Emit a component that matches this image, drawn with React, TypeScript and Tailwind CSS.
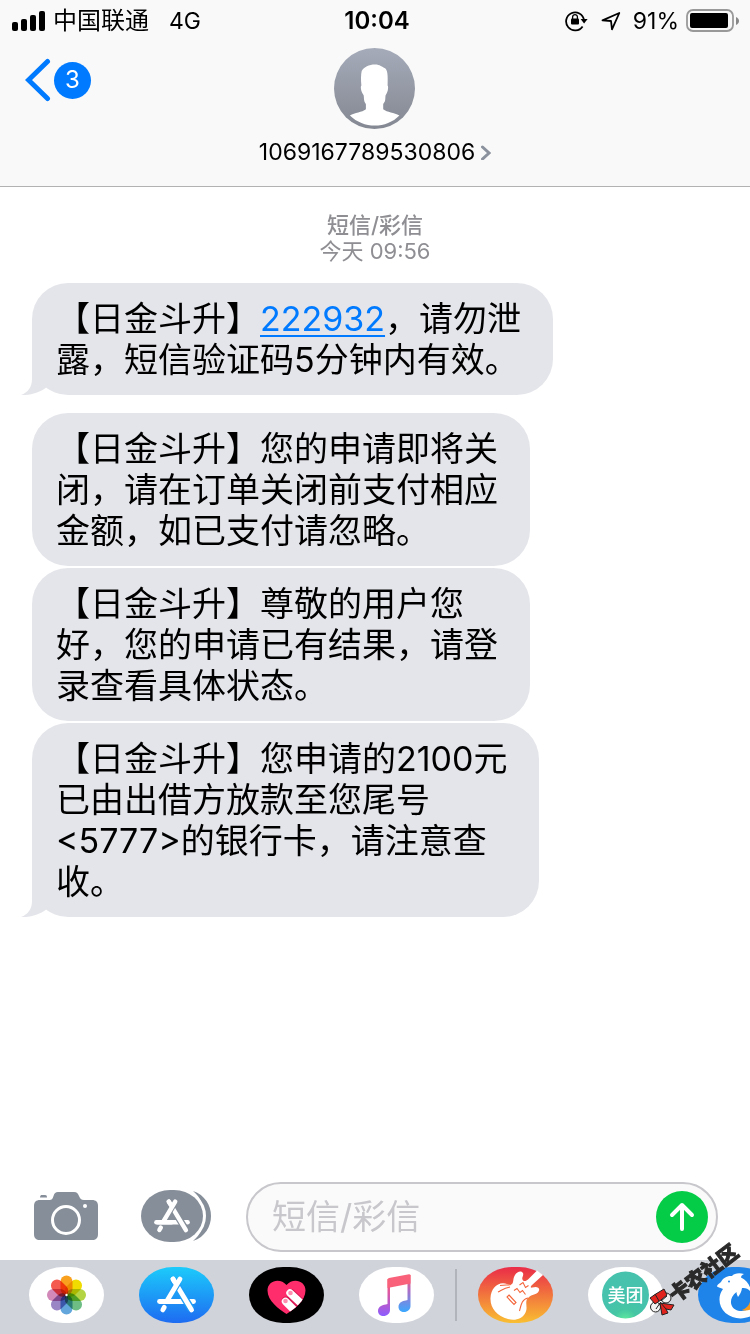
import type { ReactNode } from "react";

interface Message {
  id: number;
  lines: ReactNode[];
  tail: boolean;
}

const messages: Message[] = [
  {
    id: 1,
    lines: [
      <>
        【日金斗升】
        <a
          href="#code"
          className="text-[#007aff] underline decoration-2 underline-offset-4"
        >
          222932
        </a>
        ，请勿泄
      </>,
      "露，短信验证码5分钟内有效。",
    ],
    tail: true,
  },
  {
    id: 2,
    lines: [
      "【日金斗升】您的申请即将关",
      "闭，请在订单关闭前支付相应",
      "金额，如已支付请忽略。",
    ],
    tail: false,
  },
  {
    id: 3,
    lines: [
      "【日金斗升】尊敬的用户您",
      "好，您的申请已有结果，请登",
      "录查看具体状态。",
    ],
    tail: false,
  },
  {
    id: 4,
    lines: [
      "【日金斗升】您申请的2100元",
      "已由出借方放款至您尾号",
      "<5777>的银行卡，请注意查",
      "收。",
    ],
    tail: true,
  },
];

function StatusBar() {
  return (
    <div className="grid h-[41px] grid-cols-[1fr_auto_1fr] items-center text-black">
      <div className="flex items-center pl-3">
        <svg width="33" height="20" viewBox="0 0 33 20" aria-hidden="true">
          <rect x="0" y="11" width="6" height="9" rx="2" />
          <rect x="9" y="8" width="6" height="12" rx="2" />
          <rect x="18" y="4" width="6" height="16" rx="2" />
          <rect x="27" y="0" width="6" height="20" rx="2" />
        </svg>
        <span className="ml-2 text-2xl leading-8">中国联通</span>
        <span className="ml-5 text-[23px] leading-8">4G</span>
      </div>
      <time className="pl-1 text-2xl leading-8 font-semibold">10:04</time>
      <div className="flex items-center justify-end pr-[11px]">
        <svg width="24" height="22" viewBox="0 0 24 22" aria-hidden="true">
          <path
            d="M17.6 16.4A9 9 0 1 1 19 10"
            fill="none"
            stroke="#000"
            strokeWidth="1.8"
          />
          <path d="M15.6 9h7l-3.5 4.4z" />
          <rect x="6" y="8.5" width="8" height="6" rx="1" />
          <path
            d="M7.6 9V7a2.4 2.4 0 0 1 4.8 0v2"
            fill="none"
            stroke="#000"
            strokeWidth="1.3"
          />
        </svg>
        <svg
          className="ml-3"
          width="20"
          height="20"
          viewBox="0 0 20 20"
          aria-hidden="true"
        >
          <path
            d="M1.5 9.4 18.3 2 11 18.300 10 10z"
            fill="none"
            stroke="#000"
            strokeWidth="1.8"
            strokeLinejoin="round"
          />
        </svg>
        <span className="ml-3 text-[23px] leading-8">91%</span>
        <svg
          className="ml-[7px]"
          width="53"
          height="24"
          viewBox="0 0 53 24"
          aria-hidden="true"
        >
          <rect
            x="1"
            y="1"
            width="46"
            height="21"
            rx="6"
            fill="none"
            stroke="#999"
            strokeWidth="1.800"
          />
          <rect x="4" y="4" width="38" height="15" rx="2" />
          <path d="M50 8c4 1.500 4 6.500 0 8z" fill="#888" />
        </svg>
      </div>
    </div>
  );
}

function Avatar() {
  return (
    <svg width="81" height="81" viewBox="0 0 81 81" aria-hidden="true">
      <defs>
        <linearGradient id="avatar" x1="0" y1="0" x2="0" y2="1">
          <stop offset="0" stopColor="#a5abb9" />
          <stop offset="1" stopColor="#848892" />
        </linearGradient>
      </defs>
      <circle cx="40.5" cy="40.5" r="40.5" fill="url(#avatar)" />
      <path
        fill="#fff"
        d="M41 16.500c5 0 7 2.500 10 3.700 2.500 2 3 6 2.600 17.300 1 .5.6 6-1.400 8.700-1.200 1-.5 4-1.200 6.800-.6 1.500-1.500 2-1.800 3.300v5c4 3.200 11 3.200 16.200 6.200-13 13.400-36 13.400-49.500 0 5-3 12-3 16-6.200v-5c-.3-1.300-1.300-1.800-1.600-3.300-.7-2.800 0-5.800-1.300-6.800-2-2.700-2.800-8.200-1.600-8.700-.6-6-.5-10.500.3-14.500 2.300-4 7.300-6.500 13.300-6.500z"
      />
    </svg>
  );
}

function Header() {
  return (
    <header className="border-b border-[#b2b2b2] bg-[#f9f9f9]">
      <StatusBar />
      <div className="grid grid-cols-[1fr_auto_1fr] items-start pb-[18px]">
        <button
          type="button"
          aria-label="返回，3 条未读"
          className="mt-[17px] ml-[25px] flex items-center gap-[3px] justify-self-start"
        >
          <svg width="26" height="44" viewBox="0 0 26 44" aria-hidden="true">
            <path
              d="M22.500 3.500 3.500 22l19 18.500"
              fill="none"
              stroke="#007aff"
              strokeWidth="5"
              strokeLinecap="round"
              strokeLinejoin="miter"
            />
          </svg>
          <span className="flex size-[37px] items-center justify-center rounded-full bg-[#007aff] text-2xl text-white">
            3
          </span>
        </button>
        <button type="button" className="flex flex-col items-center pt-[7px]">
          <Avatar />
          <span className="mt-[7px] flex items-center gap-1.5 text-[23px] leading-8 text-black">
            1069167789530806
            <svg width="10" height="16" viewBox="0 0 10 16" aria-hidden="true">
              <path
                d="m1.500 3 6.500 6-6.500 6"
                fill="none"
                stroke="#8b929e"
                strokeWidth="3"
                strokeLinecap="round"
              />
            </svg>
          </span>
        </button>
      </div>
    </header>
  );
}

function Bubble({ message }: { message: Message }) {
  return (
    <li className="relative w-fit rounded-[36px] bg-[#e4e5ea] py-[15px] pr-8 pl-6 text-[34px] leading-[41px] text-black not-last:has-[svg]:mb-4">
      {message.tail && (
        <svg
          className="absolute bottom-0 -left-[11px]"
          width="44"
          height="36"
          viewBox="0 0 44 36"
          aria-hidden="true"
        >
          <path
            d="M11 0v20c0 8-4 13.500-11 16 10 .5 18-2.500 24.500-7L44 16V0z"
            fill="#e4e5ea"
          />
        </svg>
      )}
      {message.lines.map((line, i) => (
        <span key={i} className="relative block whitespace-nowrap">
          {line}
        </span>
      ))}
    </li>
  );
}

function StoreGlyph({ cut }: { cut: string }) {
  return (
    <g strokeLinecap="round" fill="none" strokeWidth="4.800" stroke="#fff">
      <path d="M20.500 34.500h34" />
      <path d="m34 12.500 18.500 30" stroke={cut} strokeWidth="7.500" strokeLinecap="butt" />
      <path d="m34 12 18.600 31" />
      <path d="M39 15 28 33" stroke={cut} strokeWidth="7.500" strokeLinecap="butt" />
      <path d="M41 12 28.500 33M25.300 40.300l-1.500 2.600M22 34.500h15" />
      <path d="m34 12 3 5" />
    </g>
  );
}

function Composer() {
  return (
    <form
      className="flex items-center bg-white pt-2 pr-8 pb-2 pl-[34px]"
      onSubmit={(e) => e.preventDefault()}
    >
      <button type="button" aria-label="相机">
        <svg width="64" height="50" viewBox="0 1 64 50">
          <path
            fill="#868e99"
            d="M6 9h9c3 0 3.500-1 4.500-4S21.500 1 24 1h16c3 0 3.800 1.500 5 4s2 4 5 4h8c4 0 6 2 6 6v28c0 4-2 6-6 6H6c-4 0-6-2-6-6V15c0-4 2-6 6-6zM6 6.500C6 4.500 7 4 8 4h3c1.500 0 2 .8 2 2.500z"
          />
          <circle cx="32" cy="29" r="13.500" fill="none" stroke="#fff" strokeWidth="3" />
          <circle cx="51" cy="15" r="2" fill="#fff" />
        </svg>
      </button>
      <button type="button" aria-label="应用" className="ml-[43px]">
        <svg width="70" height="54" viewBox="0 0 70 54">
          <path d="M52 1c24 8 24 42 0 50 15-12 15-38 0-50z" fill="#868e99" />
          <rect x="-2" y="-2" width="67" height="56" rx="30" ry="28" fill="#fff" />
          <rect width="62" height="52" rx="29" ry="26" fill="#868e99" />
          <g transform="translate(-3.500 .5) scale(.92)">
            <StoreGlyph cut="#868e99" />
          </g>
        </svg>
      </button>
      <div className="ml-[35px] flex h-[70px] min-w-0 flex-1 items-center rounded-full border-2 border-[#c7c7cc] bg-[#fafafa] pr-2 pl-6">
        <input
          type="text"
          aria-label="短信/彩信"
          placeholder="短信/彩信"
          className="min-w-0 flex-1 bg-transparent text-[34px] leading-[50px] text-black outline-none placeholder:text-[#c7c7cc]"
        />
        <button
          type="submit"
          aria-label="发送"
          className="flex size-[52px] items-center justify-center rounded-full bg-[#04cc47]"
        >
          <svg width="26" height="30" viewBox="0 0 26 30" aria-hidden="true">
            <path
              d="M13 27V3M3 13 13 3l10 10"
              fill="none"
              stroke="#fff"
              strokeWidth="4"
              strokeLinecap="round"
              strokeLinejoin="round"
            />
          </svg>
        </button>
      </div>
    </form>
  );
}

const petals = [
  "#f9a01f",
  "#f0dc00",
  "#b4d444",
  "#6dbd84",
  "#62a6dc",
  "#9a86c4",
  "#d288b8",
  "#f55a50",
];

function Pill({ fill, children }: { fill: string; children: ReactNode }) {
  return (
    <svg width="75" height="56" viewBox="0 0 75 56" aria-hidden="true">
      <rect width="75" height="56" rx="34" ry="28" fill={fill} />
      {children}
    </svg>
  );
}

function PhotosIcon() {
  return (
    <Pill fill="#fff">
      <g transform="translate(37.500 28)">
        {petals.map((color, i) => (
          <rect
            key={color}
            x="-6"
            y="-19.500"
            width="12"
            height="19.500"
            rx="6"
            fill={color}
            transform={`rotate(${i * 45})`}
            className="mix-blend-multiply"
          />
        ))}
        <circle r="1.200" fill="#fff" />
      </g>
    </Pill>
  );
}

function StoreIcon() {
  return (
    <Pill fill="url(#store)">
      <defs>
        <linearGradient id="store" x1="0" y1="0" x2="0" y2="1">
          <stop offset="0" stopColor="#1ccbfb" />
          <stop offset="1" stopColor="#1e6bf1" />
        </linearGradient>
      </defs>
      <StoreGlyph cut="#1e9df6" />
    </Pill>
  );
}

function HeartIcon() {
  const heart =
    "M37.500 47C30 42 18.500 34 18.500 23.500c0-10.500 13-13 19-5.500 6-7.500 19-5 19 5.500C56.500 34 45 42 37.500 47z";
  return (
    <Pill fill="#000">
      <clipPath id="heart">
        <path d={heart} />
      </clipPath>
      <path d={heart} fill="#ff2d6b" />
      <g clipPath="url(#heart)" strokeLinecap="round">
        <path d="m42 26.500 16 15M37 34l14 14" stroke="#d91a55" strokeWidth="9" />
        <path d="m41 26 16 15M36.500 34.500l14 14" stroke="#fff" strokeWidth="7.500" />
        <circle cx="41.500" cy="26" r="2.300" fill="#ff8fb0" />
        <circle cx="36.500" cy="34" r="2.300" fill="#ff8fb0" />
      </g>
    </Pill>
  );
}

function MusicIcon() {
  return (
    <Pill fill="#fff">
      <defs>
        <linearGradient id="note-left" x1="0" y1="0" x2="0" y2="1">
          <stop offset="0" stopColor="#ff5c62" />
          <stop offset=".35" stopColor="#e0589f" />
          <stop offset="1" stopColor="#8b5cff" />
        </linearGradient>
        <linearGradient id="note-right" x1="0" y1="0" x2="0" y2="1">
          <stop offset="0" stopColor="#ff5c62" />
          <stop offset=".4" stopColor="#b06cc4" />
          <stop offset="1" stopColor="#3ba8ff" />
        </linearGradient>
      </defs>
      <path
        d="M28.500 12h2.500v31c0 3.500-3 6-6.500 6-3 0-5.500-2-5.500-5 0-5 5-6 9.500-7z"
        fill="url(#note-left)"
      />
      <path
        d="M48.500 8h3v31c0 3.500-3 6-6.500 6-3 0-5.500-2-5.500-5 0-5 4.500-6 9-7z"
        fill="url(#note-right)"
      />
      <path d="M28.500 13q0-1.500 1.500-2l20-3.800q1.500 0 1.500 1.300v8L28.500 21z" fill="#f9607a" />
    </Pill>
  );
}

function GuitarIcon() {
  return (
    <Pill fill="url(#guitar)">
      <defs>
        <linearGradient id="guitar" x1="0" y1="0" x2="0" y2="1">
          <stop offset="0" stopColor="#ea2c48" />
          <stop offset="1" stopColor="#f9bf32" />
        </linearGradient>
      </defs>
      <path
        fill="#fff"
        d="M34 17c2-2 .5-5 3-9 2-3.500 6.500-5 8-2 1 2.500-1.500 4.500-.5 6.500 1 2.500 4 1.500 5.500 0L59 3.500l6 4.500L53.500 18.500c-1.200 1.500-1 2.500 1 2 4-1.500 7.500 0 6.500 3-1.500 4.500-6.500 3.500-10 6.500-5.500 4.500-.5 9.500-3.500 15.500C44.500 52 37 54 30 52 19 49 12 41 12.500 31 13 22 18 16.500 25 16.200c4 0 6.500 2.500 9 .8z"
      />
      <g fill="none" stroke="#f4653a" strokeWidth="1.100">
        <path d="m31 28 7 7.500-2 2-7-7.500zM36 23.500l3-2 3 4 2.500-2 3 4M41.500 18l3.500-2.500 2.500 5 3-2" />
        <path d="M22 18.500c5-1 8 0 11-1M20 25c4-2 6-4 12-5M50 31c-6 1-7 7-8.500 13" />
      </g>
    </Pill>
  );
}

function MeituanIcon() {
  return (
    <Pill fill="#fff">
      <defs>
        <radialGradient id="meituan" cx=".5" cy="1.050" r=".5">
          <stop offset="0" stopColor="#62ee9e" />
          <stop offset=".5" stopColor="#45c6a3" />
          <stop offset="1" stopColor="#46c2ad" />
        </radialGradient>
      </defs>
      <circle cx="37.500" cy="28" r="23.500" fill="url(#meituan)" />
      <text x="37.500" y="35" textAnchor="middle" fontSize="18" fontWeight="500" fill="#fff">
        美团
      </text>
    </Pill>
  );
}

function DolphinIcon() {
  return (
    <Pill fill="#1f84ea">
      <path
        fill="#fff"
        d="M19 19.500c0-2 2-2.500 4-4.500 2-4 6-6.500 11-6 2-2.500 7-3.500 12-2-2 .8-3 2-3 3.500 6 2.500 10 9 10 15-2-3.500-5-5-9-4.500-.5 4-2 6-4 9-1-2-1.500-3.500-1.500-5-5 4-6.500 8.500-5 13 1.500 4 5.500 6 10 6 3 0 7-1 10-4v9c-9 4-19 3-26-3-7-6-8-17-2.500-24-1.500-1-3-1-6-2.500z"
      />
      <path d="M52 31c1 5-2 9.500-8 12 5 1.500 10 0 14-4v-6z" fill="#f79a1e" />
      <circle cx="31" cy="14.500" r="1" fill="#1f84ea" />
    </Pill>
  );
}

function Watermark() {
  return (
    <svg
      className="pointer-events-none absolute right-0 bottom-3 z-10"
      width="104"
      height="84"
      viewBox="0 0 104 84"
      aria-hidden="true"
    >
      <g stroke="#222" strokeWidth="1">
        <circle cx="20" cy="60" r="5" fill="#f2f2f2" />
        <circle cx="9.500" cy="69" r="5" fill="#f2f2f2" />
        <path d="M4 60 9 56.500 18 51l3 6-6 5-6 4z" fill="#e0231c" />
        <path d="m14 65 14 2-3 5-5-1 2 4-6 2z" fill="#e0231c" />
        <path d="m9 56 4 7M14 64l6 7M15 63l6-5M14 65l-4 6" />
      </g>
      <text
        transform="translate(30 65) rotate(-37)"
        fontSize="20"
        fontWeight="900"
        fill="#2a2a2a"
        stroke="#2a2a2a"
        strokeWidth="1"
      >
        卡农社区
      </text>
    </svg>
  );
}

const pinnedApps = [
  { label: "照片", icon: <PhotosIcon /> },
  { label: "App Store", icon: <StoreIcon /> },
  { label: "Digital Touch", icon: <HeartIcon /> },
  { label: "音乐", icon: <MusicIcon /> },
];

const recentApps = [
  { label: "库乐队", icon: <GuitarIcon /> },
  { label: "美团", icon: <MeituanIcon /> },
  { label: "携程", icon: <DolphinIcon /> },
];

function AppDock() {
  return (
    <nav className="relative bg-[#d0d3da]">
      <div className="flex h-[74px] items-center gap-[35px] overflow-hidden pb-[5px] pl-[29px]">
        {pinnedApps.map((app) => (
          <button key={app.label} type="button" aria-label={app.label} className="shrink-0">
            {app.icon}
          </button>
        ))}
        <div className="-mx-[14px] h-[52px] w-0.5 shrink-0 bg-[#b1b4ba]" />
        {recentApps.map((app) => (
          <button key={app.label} type="button" aria-label={app.label} className="shrink-0">
            {app.icon}
          </button>
        ))}
      </div>
      <Watermark />
    </nav>
  );
}

export default function App() {
  return (
    <div className="flex min-h-screen flex-col overflow-x-hidden bg-white font-['Inter','Noto_Sans_CJK_SC',sans-serif]">
      <Header />
      <main className="flex-1 pt-[25px]">
        <p className="text-center text-[22px] leading-[26px] text-[#8e8e93]">
          <span className="block font-medium">短信/彩信</span>
          <time className="block">今天 09:56</time>
        </p>
        <ul className="mt-[19px] ml-8 flex flex-col gap-0.5">
          {messages.map((message) => (
            <Bubble key={message.id} message={message} />
          ))}
        </ul>
      </main>
      <Composer />
      <AppDock />
    </div>
  );
}
